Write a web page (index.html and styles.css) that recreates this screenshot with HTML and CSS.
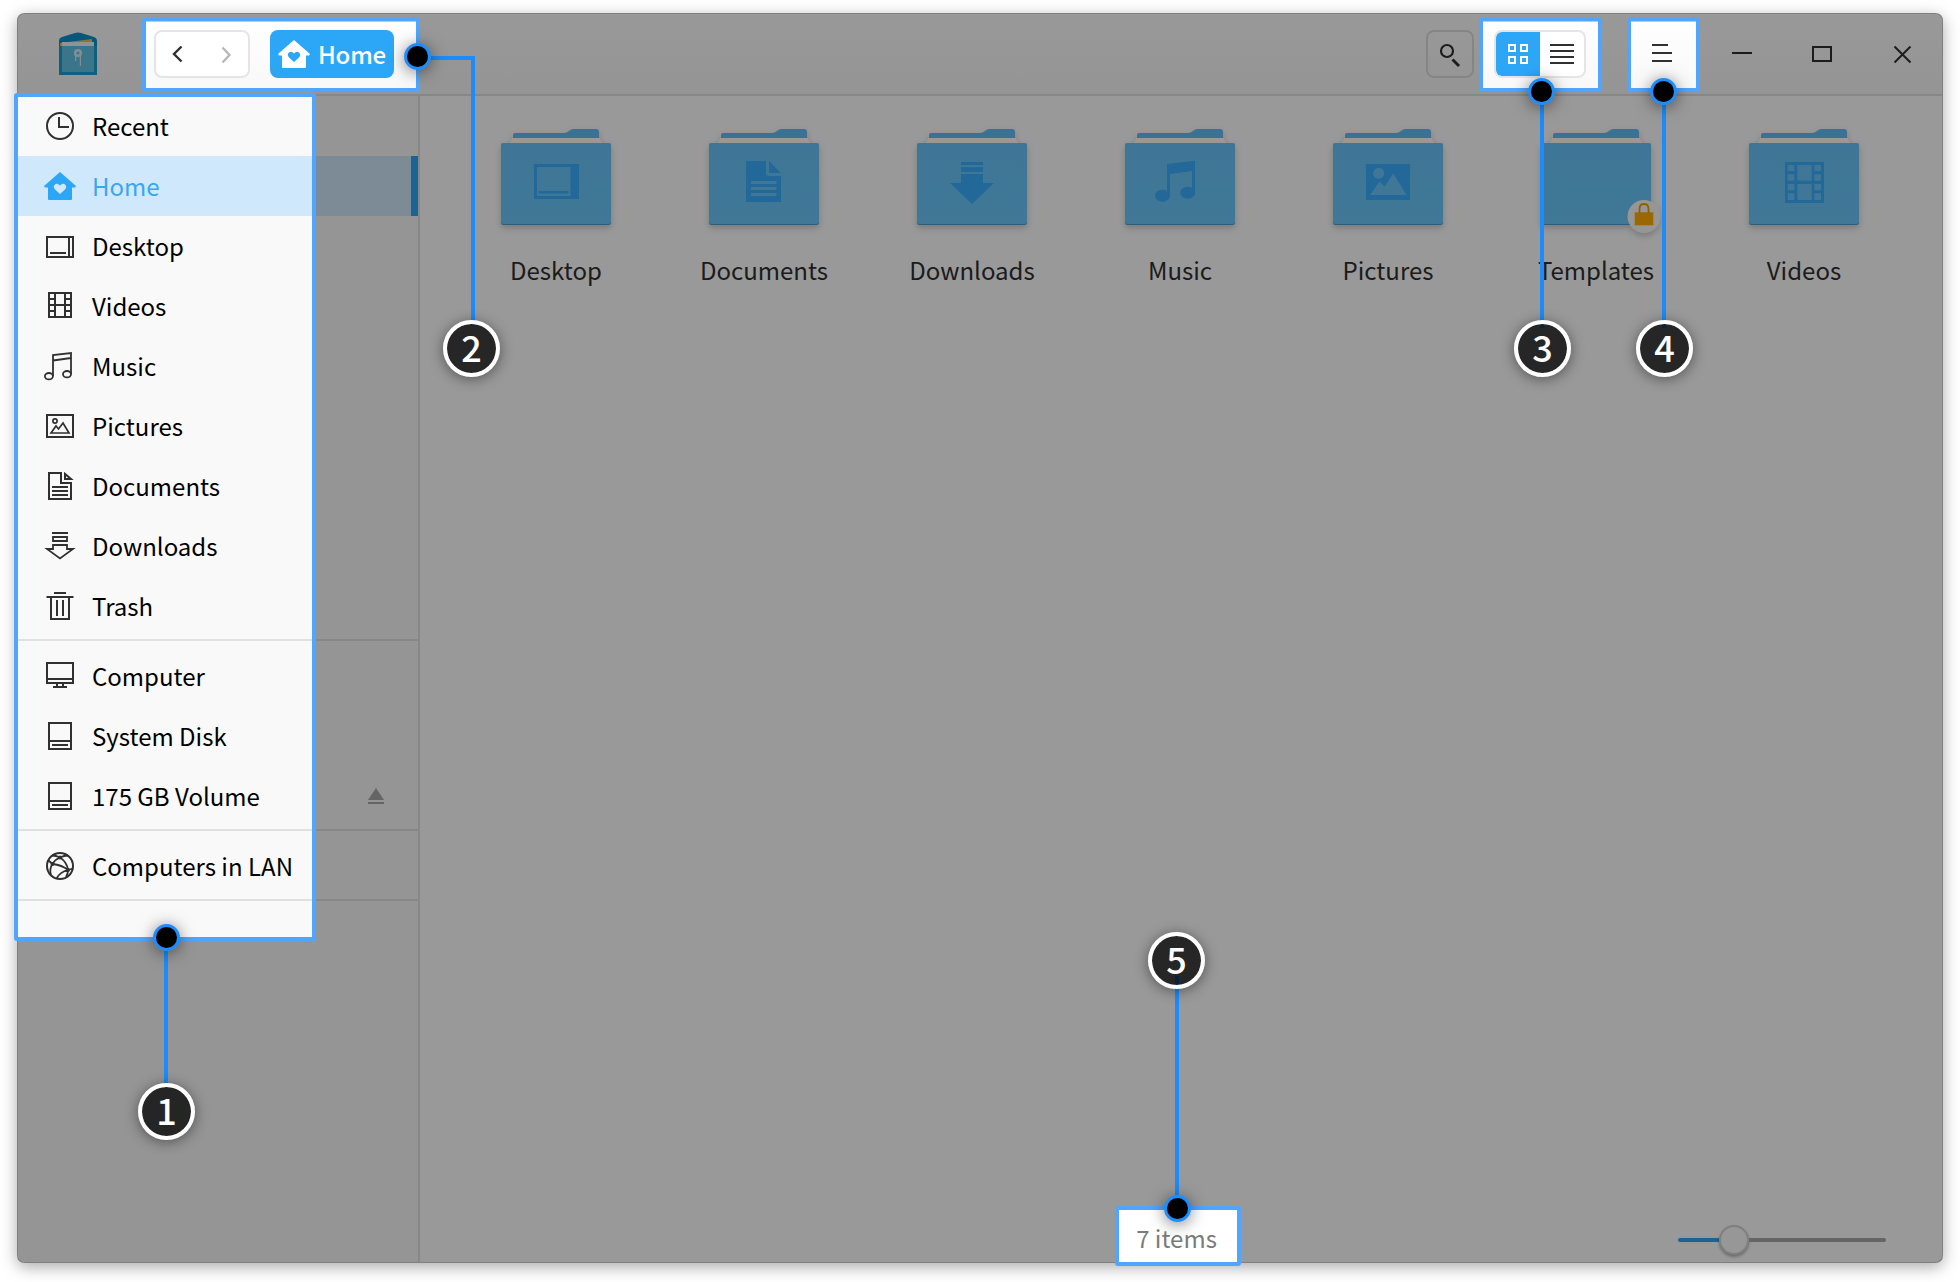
FILE: index.html
```
<!DOCTYPE html>
<html lang="en">
<head>
<meta charset="utf-8">
<title>File Manager</title>
<link rel="stylesheet" href="styles.css">
</head>
<body>
<main class="window">
  <header class="titlebar">
    <svg class="app-icon" width="40" height="44" viewBox="0 0 40 44">
      <path d="M1 9Q1 6 4 5L17 1Q20 0 23 1L36 5Q39 6 39 9V43H1Z" fill="#0a93cd"/>
      <path d="M2 11L34 7V14H2Z" fill="#e9c05a"/>
      <path d="M4 10H36V42H4Z" fill="#63c3e6"/>
      <path d="M4 10H36V14H4Z" fill="#f4f4f4"/>
      <path d="M1 14H4V40H36V14H39V43H1Z" fill="#1a9fd0"/>
      <circle cx="20" cy="21" r="2.8" fill="none" stroke="#d9edf5" stroke-width="2.6"/>
      <path d="M17.6 23V29M22.4 23V34" stroke="#d9edf5" stroke-width="1.2"/>
    </svg>
    <div class="nav">
      <svg width="92" height="44" viewBox="0 0 92 44" fill="none" stroke-width="2.4">
        <path d="M25.5 14.5L18 22L25.5 29.5" stroke="#303030"/>
        <path d="M66.500 15.500L73.500 23L66.500 30.500" stroke="#b8b8b8"/>
      </svg>
    </div>
    <div class="crumb">
      <svg width="32" height="32" viewBox="0 0 32 32"><path fill="#fff" fill-rule="evenodd" d="M16 2L32 16L31 17.500H28V29Q28 30 27 30H5Q4 30 4 29V17.500H1L0 16ZM16 24L11 19.500Q9 17 10.500 15Q13 12.500 16 15.500Q19 12.500 21.500 15Q23 17 21 19.500Z"/></svg>
      <span>Home</span>
    </div>
    <div class="search">
      <svg width="44" height="44" viewBox="0 0 44 44" fill="none" stroke="#303030"><circle cx="19" cy="19" r="6" stroke-width="2.2"/><path d="M24.500 27.500L31 34" stroke-width="2.8"/></svg>
    </div>
    <div class="views">
      <svg class="view-on" width="44" height="44" viewBox="0 0 44 44" fill="none" stroke="#fff" stroke-width="2"><path d="M13 13h6v6h-6zM25 13h6v6h-6zM13 25h6v6h-6zM25 25h6v6h-6z"/></svg>
      <svg width="44" height="44" viewBox="0 0 44 44" stroke="#303030" stroke-width="2"><path d="M10 13H34M10 19H34M10 25H34M10 31H34"/></svg>
    </div>
    <div class="controls">
      <svg width="80" height="48" viewBox="0 0 80 48"><path d="M30 15H46M30 23H50M30 31H50"/></svg>
      <svg width="80" height="48" viewBox="0 0 80 48"><path d="M30 23H50"/></svg>
      <svg width="80" height="48" viewBox="0 0 80 48"><path d="M31 17H49V31H31Z"/></svg>
      <svg width="80" height="48" viewBox="0 0 80 48"><path d="M32.500 16.500L48.500 32.500M48.500 16.500L32.500 32.500"/></svg>
    </div>
  </header>
  <div class="main">
    <nav class="sidebar">
      <div class="place"><svg viewBox="0 0 32 32"><circle cx="16" cy="16" r="13"/><path d="M15 7V17H25"/></svg>Recent</div>
      <div class="place active"><svg viewBox="0 0 32 32"><path class="solid" d="M16 2L32 16L31 17.500H28V29Q28 30 27 30H5Q4 30 4 29V17.500H1L0 16ZM16 24L11 19.500Q9 17 10.500 15Q13 12.500 16 15.500Q19 12.500 21.500 15Q23 17 21 19.500Z"/></svg>Home</div>
      <div class="place"><svg viewBox="0 0 32 32"><path d="M3 7H29V27H3ZM25 7V27M6 23H22"/></svg>Desktop</div>
      <div class="place"><svg viewBox="0 0 32 32"><path d="M5 3H27V27H5ZM11 3V27M21 3V27M5 9H11M5 15H27M5 21H11M21 9H27M21 21H27"/></svg>Videos</div>
      <div class="place"><svg viewBox="0 0 32 32"><g stroke-width="1.8"><path d="M9 26V5L27 3V24M9 10.500L27 8"/><ellipse cx="4.900" cy="26.200" rx="4" ry="3.200"/><ellipse cx="23" cy="24.200" rx="4" ry="3.200"/></g></svg>Music</div>
      <div class="place"><svg viewBox="0 0 32 32"><path d="M3 5H29V27H3Z"/><g stroke-width="1.700"><circle cx="11" cy="11" r="2.100"/><path d="M7 23L12 16L14.500 19L19 13L25 23Z"/></g></svg>Pictures</div>
      <div class="place"><svg viewBox="0 0 32 32"><path d="M5 3H17V13H27V29H5ZM21 4V9H27ZM8 17H24M8 21H24M8 25H24"/></svg>Documents</div>
      <div class="place"><svg viewBox="0 0 32 32"><path d="M8 3H24M9 7H23V11H9ZM9 19V15H23V19H29L16 28.500L3 19Z" stroke-width="1.800"/></svg>Downloads</div>
      <div class="place"><svg viewBox="0 0 32 32"><path d="M10 3H22M2.500 7H29.500M7 7V29H25V7M13 10V26M19 10V26"/></svg>Trash</div>
      <hr>
      <div class="place"><svg viewBox="0 0 32 32"><path d="M3 3H29V23H3ZM3 19H29M13 23V27M19 23V27M9 27H23"/></svg>Computer</div>
      <div class="place"><svg viewBox="0 0 32 32"><path d="M5 3H27V29H5ZM5 21H27M8 25H24"/></svg>System Disk</div>
      <div class="place"><svg viewBox="0 0 32 32"><path d="M5 3H27V29H5ZM5 21H27M8 25H24"/></svg>175 GB Volume
        <svg class="eject" viewBox="0 0 16 16"><path d="M8 0L16 12H0ZM0 14H16V16H0Z"/></svg></div>
      <hr>
      <div class="place"><svg viewBox="0 0 32 32"><circle cx="16" cy="16" r="13"/><path stroke-width="1.800" d="M8 5.500Q12 5.500 16 7.500Q20 5.500 24 5.500M16 7.500Q11 9.500 8.500 14L4 10M8.500 14Q5 19 7 25M8.500 14Q18 15 24 20M16 7.500Q23 12 24 20Q16 22 12.500 28.500M24 20L29 18.500M24 20Q24 24 22 27"/><circle class="solid" cx="16" cy="7.500" r="2"/><circle class="solid" cx="8.500" cy="14" r="2"/><circle class="solid" cx="24" cy="20" r="2"/></svg>Computers in LAN</div>
      <hr>
    </nav>
    <section class="content">
      <div class="files">
        <div class="file"><svg class="folder" viewBox="0 0 110 100"><use href="#folder"/><path class="glyph" d="M33 36Q33 35 34 35H78V70H34Q33 70 33 69ZM36 38V67H69.500V38ZM37.500 62H67.500V64.500H37.500Z"/></svg><span>Desktop</span></div>
        <div class="file"><svg class="folder" viewBox="0 0 110 100"><use href="#folder"/><path class="glyph" d="M37 32H57V44Q57 47 60 47H72V73H37ZM60 32L72 44H60ZM42 52V55H67.500V52ZM42 58V61H67.500V58ZM42 64V67H67.500V64Z"/></svg><span>Documents</span></div>
        <div class="file"><svg class="folder" viewBox="0 0 110 100"><use href="#folder"/><path class="glyph" d="M44 33H66V36H44ZM44 38H66V43H44ZM44 45H66V54H77L55 75L33 54H44Z"/></svg><span>Downloads</span></div>
        <div class="file"><svg class="folder" viewBox="0 0 110 100"><use href="#folder"/><path class="glyph" d="M42 35L70 31.700V64H67V42L45 45V67H42Z"/><ellipse class="glyph" cx="37.400" cy="66.700" rx="7.500" ry="6"/><ellipse class="glyph" cx="62.700" cy="63.700" rx="7.500" ry="6"/></svg><span>Music</span></div>
        <div class="file"><svg class="folder" viewBox="0 0 110 100"><use href="#folder"/><path class="glyph" d="M33 35H77V71H33ZM37 66H73.500L60.300 44.500L51.500 57.500L46.500 52.500ZM45.700 38.800A5.500 5.500 0 1 0 45.710 38.800Z"/></svg><span>Pictures</span></div>
        <div class="file"><svg class="folder" viewBox="0 0 110 100"><use href="#folder"/><circle class="lock-disc" cx="103" cy="87.500" r="16.500"/><path d="M93.700 83.300H112.300V96.300H93.700Z" fill="#ffae00"/><path d="M98.500 84V80Q98.500 75 103 75Q107.500 75 107.500 80V84" fill="none" stroke="#f0a000" stroke-width="1.800"/></svg><span>Templates</span></div>
        <div class="file"><svg class="folder" viewBox="0 0 110 100"><use href="#folder"/><path class="glyph" d="M36 33H75V74H36ZM38.700 36V42H45.300V36ZM38.700 45.300V51.700H45.300V45.300ZM38.700 55V61.300H45.300V55ZM38.700 64.300V71H45.300V64.300ZM65.300 36V42H72V36ZM65.300 45.300V51.700H72V45.300ZM65.300 55V61.300H72V55ZM65.300 64.300V71H72V64.300ZM48.300 36V51.700H62.700V36ZM48.300 55V71H62.700V55Z"/></svg><span>Videos</span></div>
      </div>
      <footer class="status">
        <span></span>
        <span class="count">7 items</span>
        <span class="slider"><i class="track-on"></i><i class="knob"></i><i class="track"></i></span>
      </footer>
    </section>
  </div>
</main>

<svg class="defs" width="0" height="0">
  <defs>
    <linearGradient id="front" x1="0" y1="0" x2="0" y2="1"><stop offset="0" stop-color="#6ac4fa"/><stop offset="1" stop-color="#6bc8fa"/></linearGradient>
    <g id="folder">
      <path d="M12 9V6Q12 4 14 4H63Q66 4 68 2Q70 0 73 0H95Q98 0 98 3V9Z" fill="#66bdf3"/>
      <path d="M11 9H99L101 14H9Z" fill="#fffdf5"/>
      <rect y="14" width="110" height="82" rx="2.500" fill="#4a9dcd"/>
      <rect y="14" width="110" height="81" rx="2.500" fill="url(#front)"/>
    </g>
  </defs>
</svg>

<svg class="overlay" width="1960" height="1282" viewBox="0 0 1960 1282">
  <path fill="#000" fill-opacity=".4" fill-rule="evenodd" d="M25 13H1935Q1943 13 1943 21V1255Q1943 1263 1935 1263H25Q17 1263 17 1255V21Q17 13 25 13ZM17 96V939H314V96ZM144 19V90H418V19ZM1481 19V90H1600V19ZM1629 19V90H1698V19ZM1117 1208V1263H1239V1208Z"/>
  <g class="frames">
    <rect x="16" y="95" width="298" height="844" rx="1"/>
    <rect x="144" y="19.500" width="274" height="70.500" rx="1"/>
    <rect x="1481" y="19.500" width="119" height="70.500" rx="1"/>
    <rect x="1629" y="19.500" width="69" height="70.500" rx="1"/>
    <rect x="1117" y="1208" width="122" height="56" rx="1"/>
  </g>
  <path class="wires" d="M166 940V1084M418 58H473V326M1542 92V328M1664 92V328M1177 976V1208"/>
  <g class="dots">
    <circle cx="166.500" cy="937.500" r="12"/><circle cx="417.500" cy="56.500" r="12"/><circle cx="1541.500" cy="91.500" r="12"/><circle cx="1663.500" cy="91.500" r="12"/><circle cx="1177.500" cy="1208.500" r="12"/>
  </g>
</svg>
<div class="badge b1">1</div>
<div class="badge b2">2</div>
<div class="badge b3">3</div>
<div class="badge b4">4</div>
<div class="badge b5">5</div>
</body>
</html>
```
FILE: styles.css
```
* { box-sizing: border-box; }
body {
  margin: 0;
  width: 1960px;
  height: 1282px;
  padding: 13px 17px;
  position: relative;
  overflow: hidden;
  background: #fff;
  color: #000;
  font: 24px/60px "Noto Sans CJK SC", sans-serif;
}
svg { display: block; flex: none; }
.defs { position: absolute; }
.window {
  width: 1926px;
  height: 1250px;
  border: 1px solid #d6d6d6;
  border-radius: 8px;
  background: #fff;
  box-shadow: 0 4px 16px rgba(0, 0, 0, .34);
  display: flex;
  flex-direction: column;
  overflow: hidden;
}
.titlebar {
  height: 82px;
  flex: none;
  display: flex;
  align-items: flex-start;
  padding: 16px 0 0 40px;
  border-bottom: 2px solid #e1e1e1;
  background: linear-gradient(#fff, #f8f8f8);
}
.app-icon { margin: 2px 56px 0 0; }
.nav, .search, .views {
  height: 48px;
  border: 2px solid #e5e5e5;
  border-radius: 8px;
  background: #fff;
  display: flex;
}
.search { background: none; border-color: #dedede; }
.nav { width: 96px; }
.crumb {
  width: 124px;
  height: 48px;
  margin-left: 20px;
  padding-left: 8px;
  border-radius: 8px;
  background: #2ca7f8;
  color: #fff;
  font-weight: 500;
  letter-spacing: -.2px;
  display: flex;
  align-items: center;
  gap: 8px;
}
.search { width: 48px; margin-left: auto; }
.views { width: 92px; margin-left: 20px; overflow: hidden; }
.view-on { background: #2ca7f8; border-radius: 5px 0 0 5px; }
.controls { display: flex; margin: 0 0 0 36px; }
.controls svg { fill: none; stroke: #303030; stroke-width: 2; }
.main { flex: 1; display: flex; }
.sidebar {
  width: 402px;
  border-right: 2px solid #e1e1e1;
  background: #f9f9f9;
}
.place {
  height: 60px;
  padding-left: 26px;
  display: flex;
  align-items: center;
  gap: 16px;
}
.place svg { width: 32px; height: 32px; fill: none; stroke: #303030; stroke-width: 2; }
.place .solid { fill: #303030; stroke: none; fill-rule: evenodd; }
.place.active { background: #d0e8fb; color: #3aa6f0; border-right: 7px solid #2ca7f8; }
.place.active .solid { fill: #2ca7f8; }
.place .eject { width: 16px; height: 16px; margin: 0 34px 0 auto; fill: #a8a8a8; stroke: none; }
.sidebar hr { height: 2px; margin: 3px 0 5px; border: 0; background: #e1e1e1; }
.content { flex: 1; display: flex; flex-direction: column; }
.files { display: flex; padding: 33px 0 0 32px; }
.file {
  width: 208px;
  display: flex;
  flex-direction: column;
  align-items: center;
  color: #303030;
}
.file span { margin-top: 11px; }
.folder { width: 110px; height: 100px; overflow: visible; filter: drop-shadow(0 3px 3px rgba(0, 0, 0, .2)); }
.glyph { fill: #39aeff; fill-rule: evenodd; }
.lock-disc { fill: #fbfbfb; }
.status {
  height: 44px;
  margin-top: auto;
  display: grid;
  grid-template-columns: 1fr auto 1fr;
  align-items: center;
  line-height: 40px;
  color: #7b7b7b;
  padding-right: 8px;
}
.count { padding: 0 1px 4px 0; }
.slider { width: 208px; height: 30px; display: flex; align-items: center; margin-left: auto; margin-right: 48px; }
.track-on { width: 41px; height: 4px; background: #2ca7f8; border-radius: 2px 0 0 2px; }
.knob { width: 30px; height: 30px; border: 2px solid #d4d4d4; border-radius: 50%; background: #fcfcfc; box-shadow: 0 2px 3px rgba(0, 0, 0, .3); }
.track { flex: 1; height: 4px; background: #a8a8a8; border-radius: 0 2px 2px 0; }
.overlay { position: absolute; left: 0; top: 0; }
.frames { fill: none; stroke: #50a5ff; stroke-width: 4; }
.wires { fill: none; stroke: #1b8cfb; stroke-width: 4; }
.dots { fill: #000; stroke: #1e8efc; stroke-width: 3; filter: drop-shadow(0 2px 8px rgba(0, 0, 0, .5)); }
.badge {
  position: absolute;
  width: 57px;
  height: 57px;
  border: 4px solid #fff;
  border-radius: 50%;
  background: rgba(0, 0, 0, .75);
  background-clip: padding-box;
  box-shadow: 0 2px 14px rgba(0, 0, 0, .45);
  color: #fff;
  font-size: 36px;
  font-weight: 500;
  line-height: 44px;
  text-align: center;
}
.b1 { left: 138px; top: 1083px; }
.b2 { left: 443px; top: 320px; }
.b3 { left: 1514px; top: 320px; }
.b4 { left: 1636px; top: 320px; }
.b5 { left: 1148px; top: 932px; }
```
